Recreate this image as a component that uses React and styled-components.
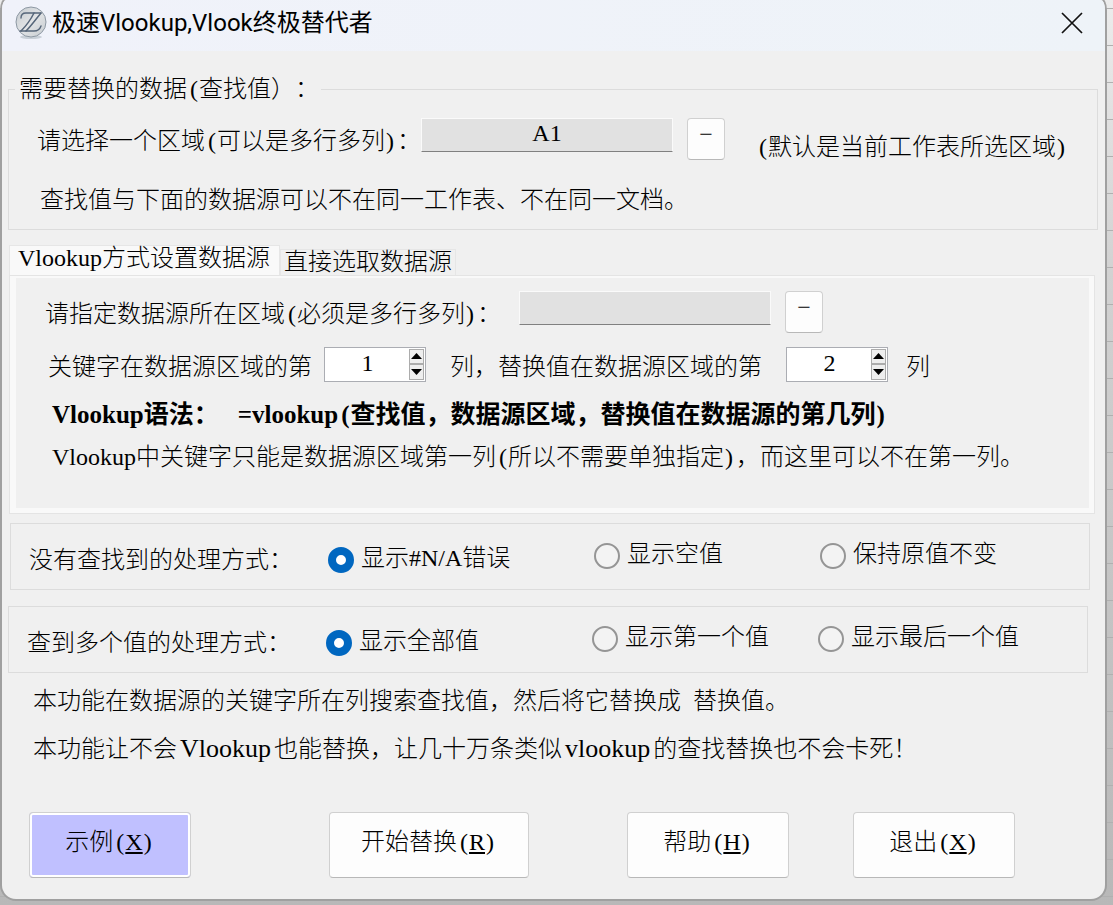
import React, { useState } from "react";
import styled, { createGlobalStyle, css } from "styled-components";

const GlobalStyle = createGlobalStyle`
  * { box-sizing: border-box; }
  body { margin: 0; background: #c4c4c4; }
  button, input { font: inherit; color: inherit; }
`;

const Desktop = styled.div`
  display: flex;
  min-height: 100vh;
  padding: 0 8px 6px 2px;
  background:
    repeating-linear-gradient(180deg, transparent 0 8px, #b0b0b0 8px 9px, transparent 9px 37px),
    linear-gradient(180deg, #ececec 0, #d2d2d2 30%, #b8b8b8 100%);
`;

const Dialog = styled.main`
  flex: 1;
  display: flex;
  flex-direction: column;
  overflow: hidden;
  background: #f0f0f0;
  border-radius: 4px 4px 14px 14px / 10px 10px 14px 14px;
  box-shadow: 0 0 0 2px #a0a0a0;
  color: #000;
  font-family: "Liberation Serif", "Noto Sans CJK SC", serif;
  font-size: 24px;
  font-weight: 300;
  line-height: 32px;
  text-spacing-trim: space-all;
  white-space: nowrap;
`;

const TitleBar = styled.header`
  display: flex;
  align-items: center;
  gap: 4px;
  height: 51px;
  padding: 0 21px 6px 12px;
  background: linear-gradient(90deg, #f0f2fa, #eef3f8);
`;

const Title = styled.h1`
  flex: 1;
  margin: 0;
  font-family: Roboto, "Noto Sans CJK SC", sans-serif;
  font-size: 24px;
  font-weight: 400;
`;

const CloseButton = styled.button`
  display: grid;
  padding: 0;
  border: 0;
  background: none;
`;

const Content = styled.div`
  padding: 22px 7px 0 6px;
`;

const Group = styled.fieldset`
  min-width: 0;
  margin: 0;
  padding: 0 29px 13px 6px;
  border: 1px solid #dcdcdc;
`;

const Legend = styled.legend`
  padding: 0 2px 0 4px;
`;

const Row = styled.div`
  display: flex;
  align-items: ${(p) => p.$align || "flex-start"};
  gap: ${(p) => p.$gap || 14}px;
  padding-left: ${(p) => p.$indent || 0}px;
  margin-top: ${(p) => p.$top || 0}px;
`;

const RangeLabel = styled.label`
  width: ${(p) => p.$width}px;
  padding-top: 7px;
`;

const RowText = styled.span`
  padding-top: 6px;
`;

const Note = styled.span`
  margin-left: auto;
  padding-top: 13px;
`;

const Line = styled.p`
  margin: ${(p) => p.$top}px 0 0;
  padding-left: ${(p) => p.$indent}px;
`;

const Syntax = styled(Line)`
  display: flex;
  gap: 19px;
  font-size: 25px;
  font-weight: 700;
`;

const Word = styled.span`
  padding: 0 3px;
  font-size: 26px;
  line-height: 24px;
`;

const HalfWidth = styled.span`
  padding: ${(p) => (p.$open ? "0 1px 0 3px" : "0 3px 0 1px")};
`;

const RangeInput = styled.input`
  width: 252px;
  height: 34px;
  padding: 0 0 3px;
  border: 1px solid #fafafa;
  border-bottom-color: #808080;
  background: #e1e1e1;
  text-align: center;
`;

const whiteButton = css`
  border: 1px solid #d0d0d0;
  border-bottom-color: #b8b8b8;
  border-radius: 4px;
  background: #fdfdfd;
`;

const PickButton = styled.button`
  ${whiteButton}
  width: 38px;
  height: 42px;
  padding: 0 0 10px;
  line-height: 24px;
`;

const Tabs = styled.div`
  display: flex;
  align-items: flex-end;
  margin: 15px 0 0 1px;
`;

const Tab = styled.button`
  height: ${(p) => (p.$active ? 30 : 26)}px;
  padding: ${(p) => (p.$active ? "0 9px 6px 8px" : "0 3px 2px")};
  border: 1px solid #e6e6e6;
  border-bottom: 0;
  background: ${(p) => (p.$active ? "#f9f9f9" : "#f0f0f0")};
  line-height: 22px;
`;

const TabPanel = styled.section`
  height: 239px;
  margin: 0 3px 9px 1px;
  padding: 13px 0 0 29px;
  border: 1px solid #e4e4e4;
  background: #f0f0f0;
  box-shadow: inset 0 0 0 2px #f9f9f9, inset 6px 0 #f9f9f9, inset -5px -5px #f9f9f9;
`;

const SpinBox = styled.span`
  display: flex;
  width: 102px;
  height: 35px;
  padding: 1px;
  border: 1px solid #abadb3;
  background: #fff;
`;

const SpinInput = styled.input`
  flex: 1;
  min-width: 0;
  padding: 0 0 3px;
  border: 0;
  background: none;
  text-align: center;
  appearance: textfield;
  &::-webkit-inner-spin-button { appearance: none; margin: 0; }
`;

const SpinButtons = styled.span`
  display: flex;
  flex-direction: column;
`;

const SpinButton = styled.button`
  display: grid;
  place-items: center;
  flex: 1;
  width: 15px;
  padding: 0;
  border: 1px solid #acacac;
  background: #eee;
`;

const ChoiceGroup = styled.div`
  display: grid;
  grid-template-columns: 299px 266px 226px 1fr;
  align-items: center;
  height: 67px;
  margin: 0 ${(p) => (p.$shifted ? "8px 0 2px" : "10px 0 0")};
  padding: 6px 0 0 18px;
  border: 1px solid #dcdcdc;
  & + & { margin-top: 16px; }
`;

const Choice = styled.label`
  display: flex;
  align-items: center;
  gap: 7px;
  padding-bottom: ${(p) => (p.$raised ? 8 : 0)}px;
`;

const Radio = styled.input`
  appearance: none;
  width: 26px;
  height: 26px;
  margin: 0;
  border: 2px solid #959595;
  border-radius: 50%;
  background: #f3f3f3;
  &:checked {
    border: 8px solid #0067c0;
    background: #fff;
  }
`;

const ChoiceText = styled.span`
  padding-bottom: 4px;
`;

const Actions = styled.div`
  display: grid;
  grid-template-columns: 300px 298px 226px 1fr;
  margin-top: 47px;
  padding-left: 21px;
`;

const ActionButton = styled.button`
  ${whiteButton}
  justify-self: start;
  width: ${(p) => (p.$wide ? 200 : 162)}px;
  height: 66px;
  padding: 0 0 6px;
  ${(p) =>
    p.$accent &&
    css`
      background: #c0c0ff;
      box-shadow: inset 0 0 0 2px #fff;
    `}
`;

const Open = () => <HalfWidth $open>(</HalfWidth>;
const Close = () => <HalfWidth>)</HalfWidth>;

function Logo() {
  return (
    <svg width="34" height="34" viewBox="0 0 34 34" aria-hidden="true">
      <defs>
        <linearGradient id="disc" x1="0" y1="0" x2="1" y2="1">
          <stop offset="0" stopColor="#c3c9ce" />
          <stop offset="0.5" stopColor="#e2e4e6" />
          <stop offset="1" stopColor="#c6cbd0" />
        </linearGradient>
      </defs>
      <ellipse cx="17" cy="31" rx="11" ry="2" fill="#c9d0d8" />
      <circle cx="17" cy="16" r="15" fill="url(#disc)" stroke="#8d98a3" />
      <g fill="none" stroke="#56667a" strokeLinecap="round">
        <path d="M7 12c0-3 2-5 5-5h15" strokeWidth="1.4" />
        <path d="M20 7C17 13 12 20 7 25M27 7C22 13 17 20 12 25" strokeWidth="1.5" />
        <path d="M6 25h14c4 0 6-2 7-5" strokeWidth="1.4" />
      </g>
    </svg>
  );
}

function Spinner({ label, initial }) {
  const [value, setValue] = useState(initial);
  return (
    <SpinBox>
      <SpinInput
        type="number"
        aria-label={label}
        value={value}
        onChange={(e) => setValue(Number(e.target.value))}
      />
      <SpinButtons>
        <SpinButton type="button" aria-label="增加" onClick={() => setValue(value + 1)}>
          <svg width="11" height="6" viewBox="0 0 11 6"><path d="M0 6 5.500 0 11 6z" /></svg>
        </SpinButton>
        <SpinButton type="button" aria-label="减少" onClick={() => setValue(Math.max(1, value - 1))}>
          <svg width="11" height="6" viewBox="0 0 11 6"><path d="M0 0 5.500 6 11 0z" /></svg>
        </SpinButton>
      </SpinButtons>
    </SpinBox>
  );
}

function Choices({ name, title, options, shifted }) {
  return (
    <ChoiceGroup role="radiogroup" aria-label={title} $shifted={shifted}>
      <span>{title}</span>
      {options.map((text, i) => (
        <Choice key={text} $raised={i > 0}>
          <Radio type="radio" name={name} defaultChecked={i === 0} />
          <ChoiceText>{text}</ChoiceText>
        </Choice>
      ))}
    </ChoiceGroup>
  );
}

function Action({ text, hotkey, ...rest }) {
  return (
    <ActionButton type="button" {...rest}>
      {text}
      <Open />
      <u>{hotkey}</u>
      <Close />
    </ActionButton>
  );
}

export default function App() {
  return (
    <Desktop>
      <GlobalStyle />
      <Dialog>
        <TitleBar>
          <Logo />
          <Title>极速Vlookup,Vlook终极替代者</Title>
          <CloseButton type="button" aria-label="关闭">
            <svg width="24" height="24" viewBox="0 0 24 24" fill="none" stroke="#111" strokeWidth="1.7">
              <path d="M2 2 22 22M22 2 2 22" />
            </svg>
          </CloseButton>
        </TitleBar>
        <Content>
          <Group>
            <Legend>需要替换的数据<Open />查找值）：</Legend>
            <Row $indent={22} $top={13}>
              <RangeLabel htmlFor="lookup-range" $width={370}>
                请选择一个区域<Open />可以是多行多列<Close />：
              </RangeLabel>
              <RangeInput id="lookup-range" defaultValue="A1" />
              <PickButton type="button" aria-label="选择区域">−</PickButton>
              <Note><Open />默认是当前工作表所选区域<Close /></Note>
            </Row>
            <Line $indent={25} $top={21}>查找值与下面的数据源可以不在同一工作表、不在同一文档。</Line>
          </Group>

          <Tabs role="tablist">
            <Tab type="button" role="tab" aria-selected="true" $active>Vlookup方式设置数据源</Tab>
            <Tab type="button" role="tab" aria-selected="false">直接选取数据源</Tab>
          </Tabs>
          <TabPanel role="tabpanel">
            <Row $indent={6} $top={2}>
              <RangeLabel htmlFor="source-range" $width={460}>
                请指定数据源所在区域<Open />必须是多行多列<Close />：
              </RangeLabel>
              <RangeInput id="source-range" />
              <PickButton type="button" aria-label="选择区域">−</PickButton>
            </Row>
            <Row $indent={9} $top={12} $gap={12} $align="center">
              <RowText>关键字在数据源区域的第</RowText>
              <Spinner label="关键字所在列" initial={1} />
              <RowText>&nbsp;&nbsp;列，替换值在数据源区域的第&nbsp;&nbsp;</RowText>
              <Spinner label="替换值所在列" initial={2} />
              <RowText>&nbsp;列</RowText>
            </Row>
            <Syntax $indent={13} $top={16}>
              <span>Vlookup语法：</span>
              <span>=vlookup<Open />查找值，数据源区域，替换值在数据源的第几列<Close /></span>
            </Syntax>
            <Line $indent={13} $top={10}>
              Vlookup中关键字只能是数据源区域第一列<Open />所以不需要单独指定<Close />，而这里可以不在第一列。
            </Line>
          </TabPanel>

          <Choices
            name="missing"
            title="没有查找到的处理方式："
            options={["显示#N/A错误", "显示空值", "保持原值不变"]}
            shifted
          />
          <Choices
            name="multiple"
            title="查到多个值的处理方式："
            options={["显示全部值", "显示第一个值", "显示最后一个值"]}
          />

          <Line $indent={25} $top={12}>本功能在数据源的关键字所在列搜索查找值，然后将它替换成&nbsp;&nbsp;替换值。</Line>
          <Line $indent={25} $top={16}>本功能让不会<Word>Vlookup</Word>也能替换，让几十万条类似<Word>vlookup</Word>的查找替换也不会卡死！</Line>

          <Actions>
            <Action text="示例" hotkey="X" $accent />
            <Action text="开始替换" hotkey="R" $wide />
            <Action text="帮助" hotkey="H" />
            <Action text="退出" hotkey="X" />
          </Actions>
        </Content>
      </Dialog>
    </Desktop>
  );
}
